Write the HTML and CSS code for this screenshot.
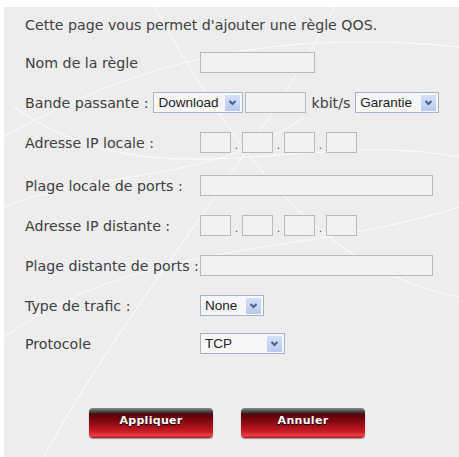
FILE: index.html
```html
<!DOCTYPE html>
<html lang="fr">
<head>
<meta charset="utf-8">
<title>Règle QOS</title>
<link rel="stylesheet" href="styles.css">
</head>
<body>
<div class="panel">
  <p class="intro">Cette page vous permet d'ajouter une règle QOS.</p>

  <div class="row">
    <span class="label">Nom de la règle</span>
    <span class="input w-name"></span>
  </div>

  <div class="row">
    <span class="label-inline">Bande passante :</span>
    <span class="select w-dl"><span class="val">Download</span><span class="arrow"><svg viewBox="0 0 15 16" width="15" height="16"><path d="M4.5 6 L7.5 9 L10.5 6" fill="none" stroke="#4d6185" stroke-width="2"/></svg></span></span>
    <span class="input w-bw"></span>
    <span class="unit">kbit/s</span>
    <span class="select w-gar"><span class="val">Garantie</span><span class="arrow"><svg viewBox="0 0 15 16" width="15" height="16"><path d="M4.5 6 L7.5 9 L10.5 6" fill="none" stroke="#4d6185" stroke-width="2"/></svg></span></span>
  </div>

  <div class="row">
    <span class="label">Adresse IP locale :</span>
    <span class="ip">
      <span class="input w-oct"></span><span class="dot">.</span>
      <span class="input w-oct"></span><span class="dot">.</span>
      <span class="input w-oct"></span><span class="dot">.</span>
      <span class="input w-oct"></span>
    </span>
  </div>

  <div class="row r-down">
    <span class="label">Plage locale de ports :</span>
    <span class="input w-wide"></span>
  </div>

  <div class="row">
    <span class="label">Adresse IP distante :</span>
    <span class="ip">
      <span class="input w-oct"></span><span class="dot">.</span>
      <span class="input w-oct"></span><span class="dot">.</span>
      <span class="input w-oct"></span><span class="dot">.</span>
      <span class="input w-oct"></span>
    </span>
  </div>

  <div class="row">
    <span class="label">Plage distante de ports :</span>
    <span class="input w-wide"></span>
  </div>

  <div class="row">
    <span class="label">Type de trafic :</span>
    <span class="select w-none"><span class="val">None</span><span class="arrow"><svg viewBox="0 0 15 16" width="15" height="16"><path d="M4.5 6 L7.5 9 L10.5 6" fill="none" stroke="#4d6185" stroke-width="2"/></svg></span></span>
  </div>

  <div class="row r-up">
    <span class="label">Protocole</span>
    <span class="select w-tcp"><span class="val">TCP</span><span class="arrow"><svg viewBox="0 0 15 16" width="15" height="16"><path d="M4.5 6 L7.5 9 L10.5 6" fill="none" stroke="#4d6185" stroke-width="2"/></svg></span></span>
  </div>

  <div class="buttons">
    <span class="btn">Appliquer</span>
    <span class="btn">Annuler</span>
  </div>
</div>
</body>
</html>
```

FILE: styles.css
```css
html, body {
  margin: 0;
  padding: 0;
  background: #ffffff;
}

body {
  font-family: "DejaVu Sans", Verdana, sans-serif;
  font-size: 14.2px;
  color: #404040;
}

.panel {
  margin: 7px 0 0 4px;
  height: 450px;
  box-sizing: border-box;
  padding: 10px 0 0 21px;
  background-color: #ededed;
  background-image: url("data:image/svg+xml;utf8,<svg xmlns='http://www.w3.org/2000/svg' width='455' height='450'><g fill='none' stroke='%23f9f9f9' stroke-width='1.2'><path d='M0 130 C 120 60, 260 20, 455 40'/><path d='M10 100 C 150 200, 300 120, 455 150'/><path d='M40 450 C 120 300, 260 140, 330 0'/><path d='M150 0 C 220 120, 300 260, 455 290'/><path d='M0 330 C 140 230, 300 250, 455 200'/><path d='M0 200 C 100 160, 200 180, 300 110'/></g></svg>");
  background-repeat: no-repeat;
}

.intro {
  margin: 0;
  height: 17px;
  line-height: 17px;
}

.row {
  display: flex;
  align-items: center;
  height: 21px;
  margin-top: 19px;
}

.intro + .row {
  margin-top: 18px;
}

.r-down {
  margin-top: 22px;
}

.r-up {
  margin-top: 17px;
}

.label {
  width: 175px;
  flex: none;
  white-space: nowrap;
}

.label-inline {
  margin-right: 5px;
  white-space: nowrap;
}

.input {
  display: inline-block;
  box-sizing: border-box;
  height: 21px;
  border: 1px solid #b3bac4;
  background: #f2f2f2;
  flex: none;
}

.w-name { width: 115px; }
.w-bw { width: 61px; margin-left: 2px; }
.w-oct { width: 31px; }
.w-wide { width: 233px; }

.ip {
  display: flex;
  align-items: center;
}

.dot {
  width: 11px;
  text-align: center;
  font-size: 11px;
  align-self: flex-end;
  line-height: 14px;
  color: #555;
}

.unit {
  margin: 0 5px 0 5px;
}

.select {
  display: inline-flex;
  align-items: center;
  box-sizing: border-box;
  height: 21px;
  border: 1px solid #a7b3c3;
  background: #f7f7f7;
  font-family: "Liberation Sans", Arial, sans-serif;
  font-size: 13.5px;
  color: #222;
  padding: 0 2px 0 4px;
  flex: none;
}

.select .val {
  flex: 1;
}

.select .arrow {
  width: 15px;
  height: 16px;
  background: linear-gradient(#d4e0fb, #b8c9ef);
  display: flex;
}

.w-dl { width: 90px; }
.w-gar { width: 84px; }
.w-none { width: 64px; }
.w-tcp { width: 85px; }

.buttons {
  display: flex;
  gap: 28px;
  margin: 54px 0 0 64px;
}

.btn {
  width: 124px;
  height: 30px;
  box-sizing: border-box;
  border-radius: 4px;
  background: linear-gradient(#8a8a8a 0%, #5a5a5a 9%, #2e2e2e 16%, #5c0008 21%, #8a0a12 48%, #c41a24 76%, #e8404a 93%, #a8101a 100%);
  box-shadow: 0 1px 1px rgba(0,0,0,0.35);
  color: #ffffff;
  font-family: "DejaVu Sans", Verdana, sans-serif;
  font-weight: bold;
  font-size: 11px;
  letter-spacing: 0.3px;
  text-align: center;
  line-height: 26px;
  text-shadow: 0 1px 1px #000;
}
```
